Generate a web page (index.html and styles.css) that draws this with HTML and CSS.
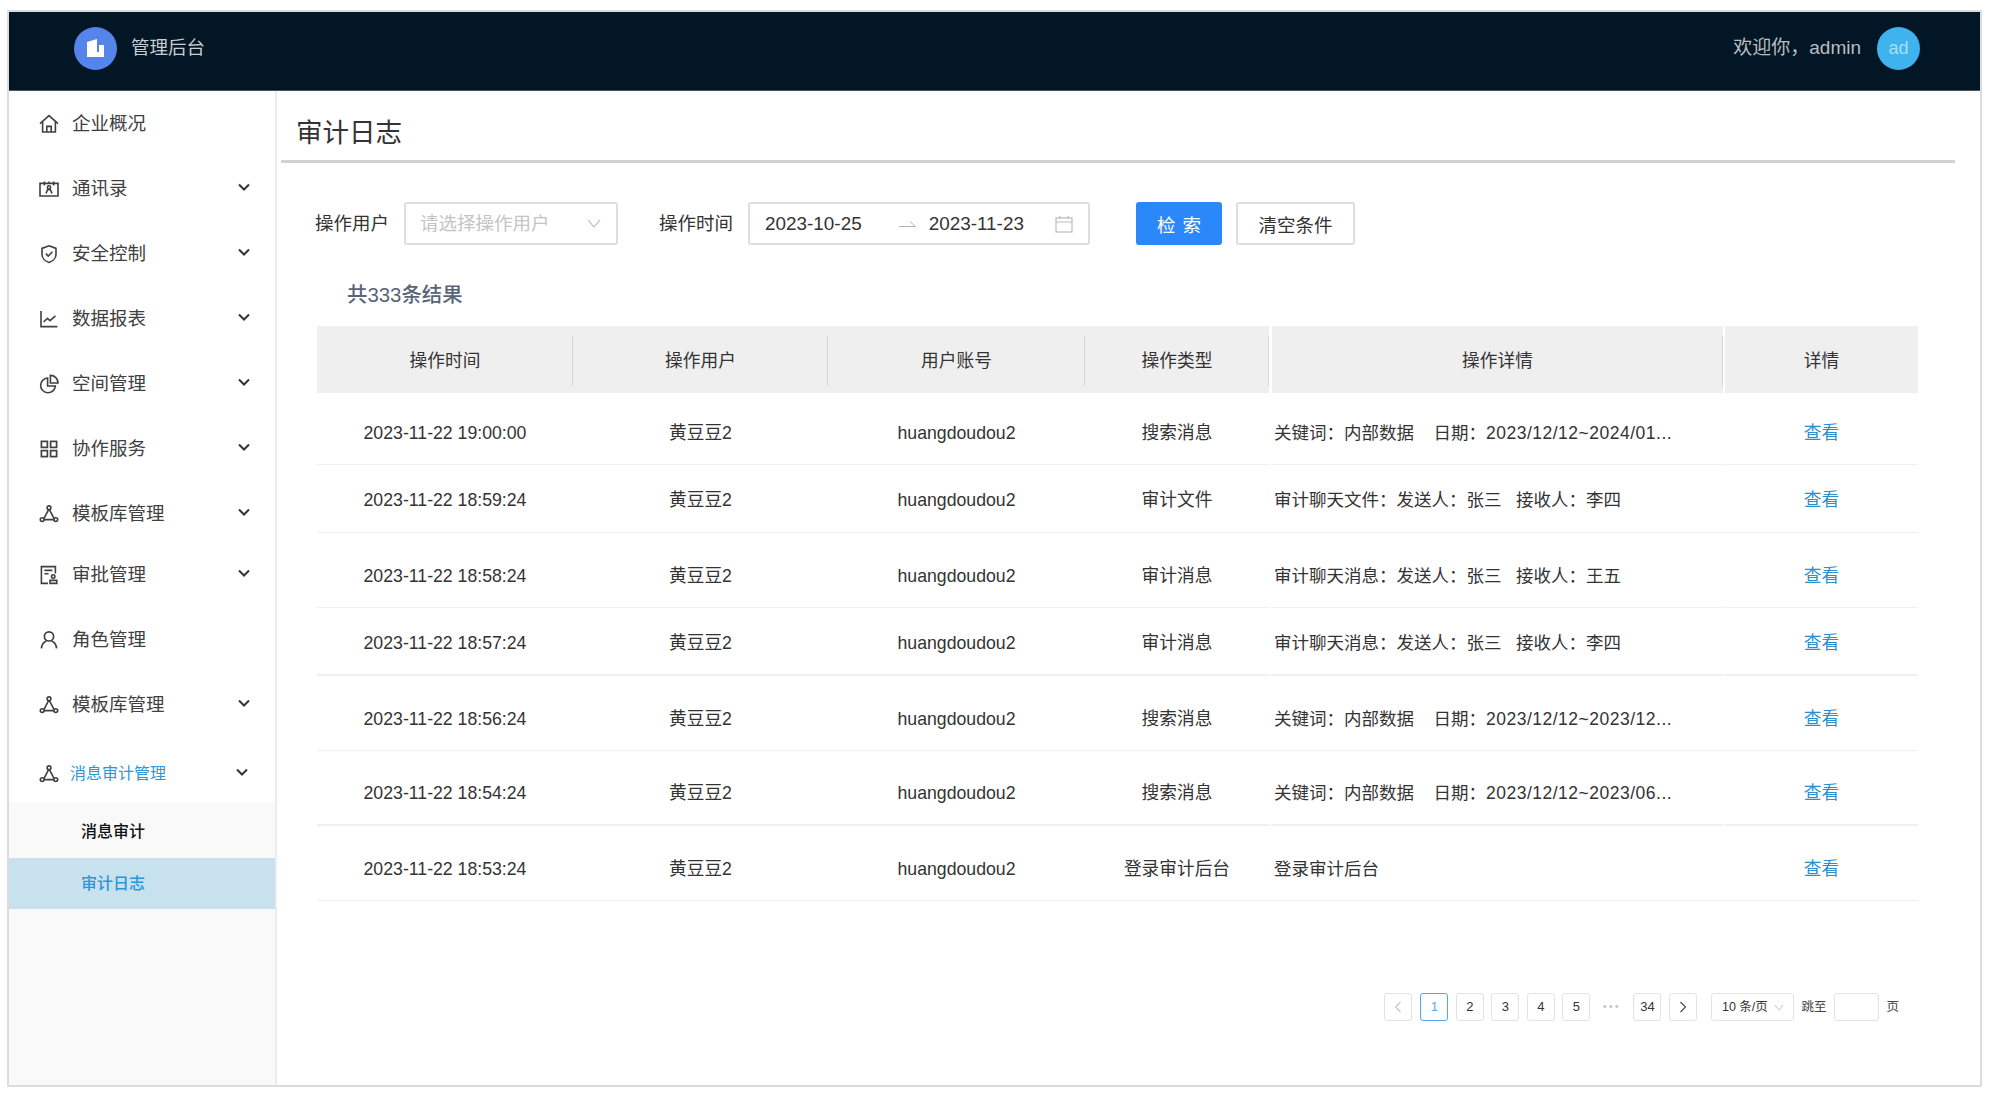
FILE: index.html
```html
<!DOCTYPE html>
<html lang="zh-CN">
<head>
    <meta charset="UTF-8">
    <title>审计日志</title>
    <link rel="stylesheet" href="styles.css">
</head>
<body>
    <svg class="icon-defs" width="0" height="0">
        <defs>
            <symbol id="i-chevron" viewBox="0 0 12 8"><path d="M1 1.5 6 6.5 11 1.5" fill="none" stroke="currentColor" stroke-width="2"/></symbol>
            <symbol id="i-tree" viewBox="0 0 20 20"><g fill="none" stroke="currentColor" stroke-width="1.6"><circle cx="10" cy="3.8" r="1.9"/><circle cx="3.2" cy="15.6" r="1.9"/><circle cx="16.8" cy="15.6" r="1.9"/><path d="M9.6 5.6 5 14.4M10.4 5.6 15 14.4M5 15.6H15"/></g></symbol>
        </defs>
    </svg>
    <div class="frame">
        <header class="topbar">
            <div class="brand">
                <span class="logo">
                    <svg width="17" height="18" viewBox="0 0 17 18"><path d="M0 3 10 0V18H0ZM12 6H17V18H12Z" fill="#fff"/><path d="M10 13H12V18H10Z" fill="#fff"/></svg>
                </span>
                <span class="brand-name">管理后台</span>
            </div>
            <div class="user">
                <span class="greet">欢迎你，admin</span>
                <span class="avatar">ad</span>
            </div>
        </header>
        <div class="body-row">
            <aside class="sidebar">
                <a class="menu-item">
                    <svg class="menu-icon" viewBox="0 0 20 20"><g fill="none" stroke="currentColor" stroke-width="1.6"><path d="M1 9.6 10 1.6 19 9.6"/><path d="M3.6 8V18H16.4V8"/><path d="M7.8 18V12.4H12.2V18"/></g></svg>
                    <span class="menu-label">企业概况</span>
                </a>
                <a class="menu-item">
                    <svg class="menu-icon" viewBox="0 0 20 20"><g fill="none" stroke="currentColor" stroke-width="1.6"><path d="M1 4.4H19V17H1Z"/><path d="M5.4 2.4V6.4M14.6 2.4V6.4M10 2.4V4.4"/><circle cx="10" cy="8.4" r="1.6"/><path d="M7 14.4 8.6 10.8H11.4L13 14.4"/></g></svg>
                    <span class="menu-label">通讯录</span>
                    <svg class="chevron"><use href="#i-chevron"/></svg>
                </a>
                <a class="menu-item">
                    <svg class="menu-icon" viewBox="0 0 20 20"><g fill="none" stroke="currentColor" stroke-width="1.6"><path d="M10 1.8 17 4.4V10.4C17 14.4 13.4 17.4 10 18.4 6.6 17.4 3 14.4 3 10.4V4.4Z"/><path d="M6.8 9.6 9.2 12 13.4 7.8"/></g></svg>
                    <span class="menu-label">安全控制</span>
                    <svg class="chevron"><use href="#i-chevron"/></svg>
                </a>
                <a class="menu-item">
                    <svg class="menu-icon" viewBox="0 0 20 20"><g fill="none" stroke="currentColor" stroke-width="1.6"><path d="M2 2V17.6H18.4"/><path d="M4.6 13 8.4 9.4 11 11.6 16.4 6.8"/></g></svg>
                    <span class="menu-label">数据报表</span>
                    <svg class="chevron"><use href="#i-chevron"/></svg>
                </a>
                <a class="menu-item">
                    <svg class="menu-icon" viewBox="0 0 20 20"><g fill="none" stroke="currentColor" stroke-width="1.6"><path d="M8.6 4A7.4 7.4 0 1 0 16.4 12H8.6Z"/><path d="M11.4 1.4A7.4 7.4 0 0 1 19 9H11.4Z"/></g></svg>
                    <span class="menu-label">空间管理</span>
                    <svg class="chevron"><use href="#i-chevron"/></svg>
                </a>
                <a class="menu-item">
                    <svg class="menu-icon" viewBox="0 0 20 20"><g fill="none" stroke="currentColor" stroke-width="1.7"><rect x="2.4" y="2.4" width="6" height="6"/><rect x="11.6" y="2.4" width="6" height="6"/><rect x="2.4" y="11.6" width="6" height="6"/><rect x="11.6" y="11.6" width="6" height="6"/></g></svg>
                    <span class="menu-label">协作服务</span>
                    <svg class="chevron"><use href="#i-chevron"/></svg>
                </a>
                <a class="menu-item short">
                    <svg class="menu-icon"><use href="#i-tree"/></svg>
                    <span class="menu-label">模板库管理</span>
                    <svg class="chevron"><use href="#i-chevron"/></svg>
                </a>
                <a class="menu-item">
                    <svg class="menu-icon" viewBox="0 0 20 20"><g fill="none" stroke="currentColor" stroke-width="1.6"><path d="M9 18.4H2.4V1.6H16.4V8.6"/><path d="M5.4 5.4H13.4M5.4 8.8H9.6"/><circle cx="14.2" cy="11.4" r="1.7"/><path d="M11 18.4V15.4H17.8V18.4Z"/></g></svg>
                    <span class="menu-label">审批管理</span>
                    <svg class="chevron"><use href="#i-chevron"/></svg>
                </a>
                <a class="menu-item">
                    <svg class="menu-icon" viewBox="0 0 20 20"><g fill="none" stroke="currentColor" stroke-width="1.7"><circle cx="10" cy="6.4" r="4.6"/><path d="M2.4 18.4C2.8 14.4 5.4 11.8 7.4 11M17.6 18.4C17.2 14.4 14.6 11.8 12.6 11"/></g></svg>
                    <span class="menu-label">角色管理</span>
                </a>
                <a class="menu-item">
                    <svg class="menu-icon"><use href="#i-tree"/></svg>
                    <span class="menu-label">模板库管理</span>
                    <svg class="chevron"><use href="#i-chevron"/></svg>
                </a>
                <a class="menu-item open">
                    <svg class="menu-icon"><use href="#i-tree"/></svg>
                    <span class="menu-label">消息审计管理</span>
                    <svg class="chevron"><use href="#i-chevron"/></svg>
                </a>
                <div class="submenu">
                    <a class="sub-item">消息审计</a>
                    <a class="sub-item current">审计日志</a>
                </div>
            </aside>
            <main class="content">
                <h1 class="page-title">审计日志</h1>

                <div class="filters">
                    <label class="filter-label">操作用户</label>
                    <div class="select">
                        <span class="placeholder">请选择操作用户</span>
                        <svg width="14" height="9" viewBox="0 0 14 9"><path d="M1 1 7 8 13 1" fill="none" stroke="#b5b5b5" stroke-width="1.1"/></svg>
                    </div>
                    <label class="filter-label second">操作时间</label>
                    <div class="range-picker">
                        <span class="range-start">2023-10-25</span>
                        <svg class="range-arrow" width="18" height="8" viewBox="0 0 18 8"><path d="M0 6.5H16.5L11 1.5" fill="none" stroke="#b5b5b5" stroke-width="1"/></svg>
                        <span class="range-end">2023-11-23</span>
                        <svg class="range-cal" width="18" height="18" viewBox="0 0 18 18"><g fill="none" stroke="#bcbcbc" stroke-width="1.2"><rect x="1" y="3" width="16" height="14"/><path d="M1 7H17M5 1V4M13 1V4"/></g></svg>
                    </div>
                    <button class="btn btn-primary">检 索</button>
                    <button class="btn">清空条件</button>
                </div>

                <div class="result-count">共333条结果</div>

                <table class="log-table">
                    <colgroup>
                        <col class="col-time"><col class="col-user"><col class="col-account"><col class="col-type"><col class="col-detail"><col class="col-view">
                    </colgroup>
                    <thead>
                        <tr>
                            <th>操作时间</th>
                            <th>操作用户</th>
                            <th>用户账号</th>
                            <th>操作类型</th>
                            <th class="gap-3">操作详情</th>
                            <th class="gap-2">详情</th>
                        </tr>
                    </thead>
                    <tbody>
                        <tr class="row-first">
                            <td>2023-11-22 19:00:00</td><td>黄豆豆2</td><td>huangdoudou2</td><td>搜索消息</td>
                            <td class="gap-3 detail">关键词：内部数据&nbsp;&nbsp;&nbsp;&nbsp;日期：<span class="detail-date">2023/12/12~2024/01...</span></td>
                            <td class="gap-2"><a class="view-link">查看</a></td>
                        </tr>
                        <tr class="row-short">
                            <td>2023-11-22 18:59:24</td><td>黄豆豆2</td><td>huangdoudou2</td><td>审计文件</td>
                            <td class="gap-3 detail">审计聊天文件：发送人：张三&nbsp;&nbsp;&nbsp;接收人：李四</td>
                            <td class="gap-2"><a class="view-link">查看</a></td>
                        </tr>
                        <tr class="row-tall">
                            <td>2023-11-22 18:58:24</td><td>黄豆豆2</td><td>huangdoudou2</td><td>审计消息</td>
                            <td class="gap-3 detail">审计聊天消息：发送人：张三&nbsp;&nbsp;&nbsp;接收人：王五</td>
                            <td class="gap-2"><a class="view-link">查看</a></td>
                        </tr>
                        <tr class="row-short thick">
                            <td>2023-11-22 18:57:24</td><td>黄豆豆2</td><td>huangdoudou2</td><td>审计消息</td>
                            <td class="gap-3 detail">审计聊天消息：发送人：张三&nbsp;&nbsp;&nbsp;接收人：李四</td>
                            <td class="gap-2"><a class="view-link">查看</a></td>
                        </tr>
                        <tr class="row-tall">
                            <td>2023-11-22 18:56:24</td><td>黄豆豆2</td><td>huangdoudou2</td><td>搜索消息</td>
                            <td class="gap-3 detail">关键词：内部数据&nbsp;&nbsp;&nbsp;&nbsp;日期：<span class="detail-date">2023/12/12~2023/12...</span></td>
                            <td class="gap-2"><a class="view-link">查看</a></td>
                        </tr>
                        <tr class="row-tall thick">
                            <td>2023-11-22 18:54:24</td><td>黄豆豆2</td><td>huangdoudou2</td><td>搜索消息</td>
                            <td class="gap-3 detail">关键词：内部数据&nbsp;&nbsp;&nbsp;&nbsp;日期：<span class="detail-date">2023/12/12~2023/06...</span></td>
                            <td class="gap-2"><a class="view-link">查看</a></td>
                        </tr>
                        <tr class="row-tall">
                            <td>2023-11-22 18:53:24</td><td>黄豆豆2</td><td>huangdoudou2</td><td>登录审计后台</td>
                            <td class="gap-3 detail">登录审计后台</td>
                            <td class="gap-2"><a class="view-link">查看</a></td>
                        </tr>
                    </tbody>
                </table>

                <div class="pagination">
                    <span class="page-box disabled">
                        <svg width="8" height="12" viewBox="0 0 8 12"><path d="M6.5 1 1.5 6 6.5 11" fill="none" stroke="#c4c4c4" stroke-width="1.1"/></svg>
                    </span>
                    <span class="page-box active">1</span>
                    <span class="page-box">2</span>
                    <span class="page-box">3</span>
                    <span class="page-box">4</span>
                    <span class="page-box">5</span>
                    <span class="page-dots">•••</span>
                    <span class="page-box">34</span>
                    <span class="page-box">
                        <svg width="8" height="12" viewBox="0 0 8 12"><path d="M1.5 1 6.5 6 1.5 11" fill="none" stroke="#444" stroke-width="1.1"/></svg>
                    </span>
                    <span class="page-size">10 条/页
                        <svg width="10" height="7" viewBox="0 0 10 7"><path d="M1 1 5 6 9 1" fill="none" stroke="#c4c4c4" stroke-width="1"/></svg>
                    </span>
                    <span class="page-text">跳至</span>
                    <span class="page-input"></span>
                    <span class="page-text">页</span>
                </div>
            </main>
        </div>
    </div>
</body>
</html>
```

FILE: styles.css
```css
* {
    box-sizing: border-box;
    margin: 0;
    padding: 0;
}

body {
    background-color: #ffffff;
    color: #333333;
    font-family: "Liberation Sans", "Noto Sans CJK SC", sans-serif;
    font-size: 17.7px;
    line-height: 24px;
    overflow: hidden;
}

.icon-defs {
    position: absolute;
}

.frame {
    display: flex;
    flex-direction: column;
    width: 1975px;
    height: 1077px;
    margin: 10px 0 0 7px;
    border: 2px solid #dcdcdc;
}

.topbar {
    display: flex;
    justify-content: space-between;
    align-items: center;
    flex: none;
    height: 79px;
    padding: 0 60px 6px 65px;
    background-color: #021625;
    border-bottom: 1px solid #4a5560;
}

.brand,
.user {
    display: flex;
    align-items: center;
}

.logo {
    display: flex;
    justify-content: center;
    align-items: center;
    width: 43px;
    height: 43px;
    border-radius: 50%;
    background-color: #5585ea;
}

.brand-name {
    margin-left: 14px;
    font-size: 18.5px;
    color: #c9cdd1;
}

.greet {
    font-size: 19px;
    color: #b9bec3;
}

.avatar {
    display: flex;
    justify-content: center;
    align-items: center;
    width: 43px;
    height: 43px;
    margin-left: 16px;
    border-radius: 50%;
    background-color: #3fb3ee;
    color: #a9def8;
    font-size: 18px;
}

.body-row {
    display: flex;
    flex: 1;
    min-height: 0;
}

.sidebar {
    flex: none;
    display: flex;
    flex-direction: column;
    width: 268px;
    border-right: 2px solid #ececec;
}

.menu-item {
    display: flex;
    align-items: center;
    flex: none;
    height: 65px;
    padding: 0 25px 0 30px;
    color: #404040;
}

.menu-item.short {
    height: 61px;
    padding-top: 4px;
}

.menu-icon {
    flex: none;
    width: 20px;
    height: 20px;
    margin-right: 13px;
    color: #404040;
}

.menu-label {
    flex: 1;
    font-size: 18.5px;
}

.chevron {
    flex: none;
    width: 12px;
    height: 8px;
    margin-top: -3px;
    color: #333333;
}

.menu-item.open {
    padding-top: 8px;
    padding-right: 27px;
}

.menu-item.open .menu-icon {
    margin-right: 11px;
}

.menu-item.open .menu-label {
    font-size: 16px;
    color: #2a97d8;
}

.submenu {
    flex: 1;
    background-color: #f9f9f9;
}

.sub-item {
    display: flex;
    align-items: center;
    height: 56px;
    padding: 3px 0 0 72px;
    font-size: 16px;
    font-weight: 500;
    color: #111111;
}

.sub-item.current {
    height: 51px;
    padding-top: 1px;
    background-color: #c8e1ef;
    color: #2a97d8;
}

.content {
    flex: 1;
    min-width: 0;
    display: flex;
    flex-direction: column;
    align-items: flex-start;
}

.page-title {
    align-self: stretch;
    height: 72px;
    margin: 0 25px 0 4px;
    padding: 23px 0 0 15px;
    border-bottom: 3px solid #d2d2d2;
    font-size: 26.5px;
    line-height: 38px;
    font-weight: 400;
    color: #333333;
}

.filters {
    display: flex;
    align-items: center;
    height: 43px;
    margin: 39px 0 0 38px;
}

.filter-label {
    font-size: 18.5px;
    margin-right: 15px;
}

.filter-label.second {
    margin-left: 41px;
    margin-right: 15px;
}

.select,
.range-picker {
    display: flex;
    align-items: center;
    height: 43px;
    background-color: #ffffff;
    border: 2px solid #dedede;
    border-radius: 3px;
}

.select {
    justify-content: space-between;
    width: 214px;
    padding: 0 15px 0 14px;
}

.placeholder {
    font-size: 18.5px;
    color: #c4c4c4;
}

.range-picker {
    width: 342px;
    padding: 0 15px;
    font-size: 18.9px;
}

.range-arrow {
    margin: 0 12px 0 37px;
}

.range-cal {
    margin-left: auto;
}

.btn {
    height: 43px;
    margin-left: 14px;
    padding: 0 20.5px;
    background-color: #ffffff;
    border: 2px solid #dedede;
    border-radius: 3px;
    font-family: inherit;
    font-size: 18.5px;
    color: #333333;
}

.btn-primary {
    width: 86px;
    margin-left: 46px;
    padding: 0;
    background-color: #2b88fb;
    border-color: #2b88fb;
    color: #ffffff;
    word-spacing: 2px;
}

.result-count {
    margin: 35px 0 0 70px;
    font-size: 20.4px;
    line-height: 30px;
    font-weight: 500;
    color: #5a6478;
}

.log-table {
    width: 1601px;
    margin: 16px 0 0 40px;
    border-spacing: 0;
    table-layout: fixed;
}

.col-time { width: 256px; }
.col-user { width: 255px; }
.col-account { width: 257px; }
.col-type { width: 184px; }
.col-detail { width: 454px; }
.col-view { width: 195px; }

.log-table th {
    position: relative;
    height: 67px;
    padding-top: 2px;
    background-color: #efefef;
    font-weight: 400;
    text-align: center;
    background-clip: padding-box;
}

.log-table th::after {
    content: "";
    position: absolute;
    top: 10px;
    bottom: 7px;
    right: 0;
    width: 1px;
    background-color: #d6d6d6;
}

.log-table th:last-child::after {
    display: none;
}

.log-table td {
    text-align: center;
    white-space: nowrap;
    overflow: hidden;
    border-bottom: 1px solid #f0f0f0;
    background-clip: padding-box;
}

.log-table .gap-3 {
    border-left: 3px solid #ffffff;
}

.log-table .gap-2 {
    border-left: 2px solid #ffffff;
}

.log-table td.detail {
    padding-left: 2px;
    text-align: left;
    font-size: 17.5px;
}

.detail-date {
    letter-spacing: 0.5px;
}

.row-first td {
    height: 72px;
    padding-top: 8px;
}

.row-short td {
    height: 68px;
    padding-top: 2px;
}

.row-tall td {
    height: 75px;
    padding-top: 11px;
}

.log-table .row-short.thick td {
    padding-top: 4px;
}

.log-table .thick td {
    border-bottom-width: 2px;
}

.view-link {
    color: #2a8fd0;
}

.pagination {
    display: flex;
    align-items: center;
    align-self: flex-end;
    gap: 7.5px;
    margin: 92px 81px 0 0;
    font-size: 13px;
}

.page-box,
.page-dots {
    display: flex;
    justify-content: center;
    align-items: center;
    width: 28px;
    height: 28px;
}

.page-box,
.page-size,
.page-input {
    background-color: #ffffff;
    border: 1.5px solid #e3e3e3;
    border-radius: 3px;
}

.page-box.disabled {
    margin-right: 1px;
}

.page-box.active {
    border-color: #55a5f7;
    color: #55a5f7;
}

.page-dots {
    font-size: 10px;
    letter-spacing: 2.5px;
    color: #c0c0c0;
}

.page-size {
    display: flex;
    justify-content: space-between;
    align-items: center;
    width: 83px;
    height: 28px;
    margin-left: 6.5px;
    padding: 0 9px 0 10px;
    font-size: 12.5px;
}

.page-input {
    width: 45px;
    height: 28px;
}

.page-text {
    font-size: 12.5px;
    color: #444444;
}
```
